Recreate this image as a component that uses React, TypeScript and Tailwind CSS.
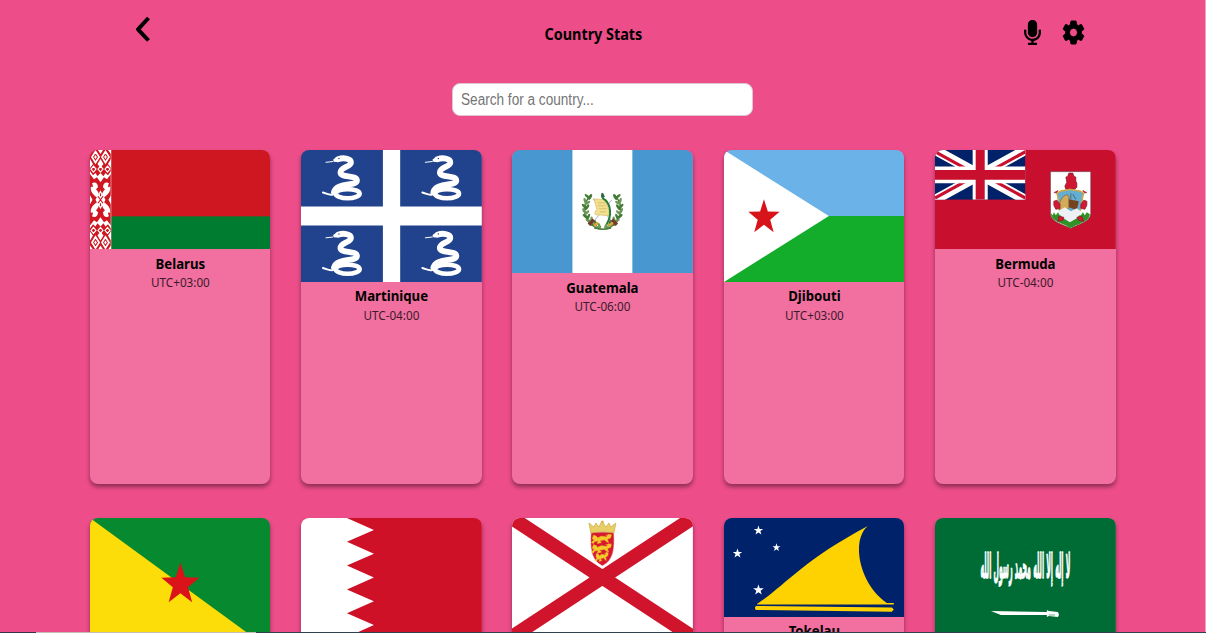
import type { ReactNode } from 'react';
import { FaMicrophone } from 'react-icons/fa';
import { MdSettings } from 'react-icons/md';

const STAR = '0,-10 2.35,-3.24 9.51,-3.09 3.8,1.24 5.88,8.09 0,4 -5.88,8.09 -3.8,1.24 -9.51,-3.09 -2.35,-3.24';

function Flag({ height, className, children }: { height: number; className: string; children: ReactNode }) {
  return (
    <svg viewBox={`0 0 181 ${height}`} preserveAspectRatio="none" className={`block w-full shrink-0 ${className}`} aria-hidden="true">
      {children}
    </svg>
  );
}

function OrnamentHalf() {
  return (
    <g>
      <path d="M0 0H3L0 4zM8 0h5l-2.500 4zM21 0h-3l3 4z" fill="#fff" />
      <path d="M5.500 1.500l3.600 5.500-3.600 5.500L2 7zM15.500 1.500L19 7l-3.500 5.500L12 7z" fill="none" stroke="#fff" strokeWidth="1.700" />
      <path d="M5.500 5l1.400 2-1.400 2-1.400-2zM15.500 5l1.400 2-1.400 2-1.400-2z" fill="#fff" />
      <path d="M0 9l3 5-3 4zM21 9l-3 5 3 4zM10.500 9l3 5-3 4-3-4z" fill="#fff" />
      <path d="M1 19l2.500-3L6 19l-2.500 3zM8 19l2.500-3 2.500 3-2.500 3zM15 19l2.500-3 2.500 3-2.500 3z" fill="none" stroke="#fff" strokeWidth="1.200" />
      <path d="M0 21l3 4 2.500-2 2 3 3-3 3 3 2-3L18 25l3-4v3l-4 5-3-2-3.500 5L7 27l-3 2-4-5z" fill="#fff" />
      <path d="M2 33c3-2 6 0 6 4l-2 2c2 2 3 4 3 6l-2 2C2 44 0 40 1 36c1 2 3 1 1-3zM19 33c-3-2-6 0-6 4l2 2c-2 2-3 4-3 6l2 2c5-3 7-7 6-11-1 2-3 1-1-3z" fill="#fff" />
    </g>
  );
}

function Belarus() {
  return (
    <Flag height={99} className="h-[99.500px]">
      <rect width="181" height="99" fill="#ce1720" />
      <rect y="66" width="181" height="33" fill="#007c30" />
      <rect width="21.200" height="99" fill="#ce1720" />
      <OrnamentHalf />
      <g transform="matrix(1 0 0 -1 0 99)"><OrnamentHalf /></g>
      <path d="M10.500 40l5 9.500-5 9.500-5-9.500z" fill="#fff" />
      <path d="M8 46l5 7M13 46l-5 7M10.500 43v3M10.500 53v3" stroke="#ce1720" strokeWidth="1.200" />
      <path d="M0 45l2.500 4.500L0 54zM21 45l-2.500 4.500L21 54z" fill="#fff" />
      <path d="M21 0v99" stroke="#fff" strokeWidth=".5" />
    </Flag>
  );
}

function Snake({ x, y }: { x: number; y: number }) {
  return (
    <g transform={`translate(${x} ${y})`} fill="none" stroke="#fff" strokeLinecap="round" strokeLinejoin="round">
      <path d="M37 9.200C42 7.500 50 8 50 12.500S39.500 17 39.500 22.500 56 24.500 56 30.500 36 32 33 42" strokeWidth="5.800" />
      <ellipse cx="46.700" cy="43.700" rx="12" ry="4.600" strokeWidth="4.600" />
      <path d="M34 10.200l5-1.200" strokeWidth="3.500" />
      <path d="M32 11.500l-7 .8" strokeWidth="1" />
      <path d="M32 44.500c-4 1-6-1-10-2" strokeWidth="2" />
      <circle cx="38" cy="8.500" r=".7" fill="#21428c" stroke="none" />
    </g>
  );
}

function Martinique() {
  return (
    <Flag height={132} className="h-[132px]">
      <rect width="181" height="132" fill="#21428c" />
      <path d="M82 0h17.300v132H82zM0 56.500h181v19H0z" fill="#fff" />
      <Snake x={0} y={0} />
      <Snake x={99.500} y={0} />
      <Snake x={0} y={75.500} />
      <Snake x={99.500} y={75.500} />
    </Flag>
  );
}

const LEAVES = [
  [76, 46, -10], [74, 51, 20], [73, 56, -5], [73, 61, 10], [74, 66, -15], [77, 70, -35], [81, 74, -50], [85, 77, -65],
];

function Laurel() {
  return (
    <g>
      <path d="M79 45c-9 9-9 26 5 33" fill="none" stroke="#477c3c" strokeWidth="1.500" />
      {LEAVES.map(([x, y, r], i) => (
        <g key={i} transform={`translate(${x} ${y}) rotate(${r})`} fill={i % 2 ? '#6c9857' : '#437b35'}>
          <ellipse cx="-.8" cy="0" rx="1.300" ry="3.300" transform="rotate(-38)" />
          <ellipse cx="2.600" cy="0" rx="1.300" ry="3.300" transform="rotate(38)" />
        </g>
      ))}
    </g>
  );
}

function Guatemala() {
  return (
    <Flag height={124} className="h-[123.500px]">
      <rect width="181" height="124" fill="#4997d0" />
      <rect x="60.500" width="60" height="124" fill="#fff" />
      <Laurel />
      <g transform="matrix(-1 0 0 1 181.500 0)"><Laurel /></g>
      <path d="M79 75l21-25M103 75L81 49" stroke="#aaa9b2" strokeWidth=".9" />
      <path d="M77 75l5-5M105 75l-5-5" stroke="#743b2c" strokeWidth="3.500" />
      <path d="M82 49l13 1c1 3-1 5 2 9v7l-13-1c-2-1-1-4 1-5z" fill="#f2df90" stroke="#d4b961" strokeWidth=".6" />
      <path d="M86 53h8M86 56h8M87 59h8M88 62h6" stroke="#c9ad62" strokeWidth=".6" />
      <path d="M91 45c-2 1 0 4 2 5 6 5 7 16 2 24" fill="none" stroke="#247b39" strokeWidth="2" />
      <path d="M89 44l2-1 2 4-2 1z" fill="#26643b" />
      <path d="M82 76l4-3M97 76l4-3" stroke="#dda72d" strokeWidth="2.500" />
      <path d="M83 78q8 3 16 0" stroke="#477c3c" strokeWidth="1.500" fill="none" />
    </Flag>
  );
}

function Djibouti() {
  return (
    <Flag height={132} className="h-[132px]">
      <rect width="181" height="66" fill="#6ab2e7" />
      <rect y="66" width="181" height="66" fill="#14ad2b" />
      <path d="M0 0l105 66L0 132z" fill="#fff" />
      <polygon points={STAR} transform="translate(40 67.500) scale(1.650 1.830)" fill="#d7141a" />
    </Flag>
  );
}

function Bermuda() {
  return (
    <Flag height={99} className="h-[99.500px]">
      <rect width="181" height="99" fill="#c8102e" />
      <svg width="90.500" height="49.500" viewBox="0 0 60 30" preserveAspectRatio="none">
        <rect width="60" height="30" fill="#012169" />
        <path d="M0 0l60 30M60 0L0 30" stroke="#fff" strokeWidth="6" />
        <path d="M0 1l28 14M60 29L32 15M60 1L32 15M0 29l28-14" stroke="#c8102e" strokeWidth="2" />
        <path d="M30 0v30M0 15h60" stroke="#fff" strokeWidth="10" />
        <path d="M30 0v30M0 15h60" stroke="#c8102e" strokeWidth="6" />
      </svg>
      <path d="M115.500 21.500H156V63c0 9-15 12-20 15-6-3-20.500-6-20.500-15z" fill="#fff" stroke="#74313d" strokeWidth=".7" />
      <path d="M116 63l2 2 1-3 2 3 2-3 2 3h21l2-3 2 3 2-3 3 2c0 8-14 10-19.500 14C130 73 116 72 116 63z" fill="#329126" />
      <path d="M131 27l2-1 1-3h4l1 3 2 1v4l1 2v4l-2 2h-9l-1-3 2-4z" fill="#cf1731" stroke="#7a172a" strokeWidth=".7" />
      <path d="M122 43c5-4 8-2 13-4 5 2 9 0 14 4-3 6-1 12-3 16-3 5-7 7-11 10-5-3-8-5-11-10-2-5 1-10-2-16z" fill="#64afd1" stroke="#cfa743" strokeWidth="1.500" />
      <path d="M125 52c3-7 7-9 9-6v11l-3 4-6-1z" fill="#d2aa59" stroke="#86602b" strokeWidth=".7" />
      <path d="M134 49l10 2-2 9-8-3z" fill="#75431f" />
      <path d="M123 61l7-4 6 4 6-3 5 4-5 6-7 4-8-5z" fill="#edf0f4" />
      <path d="M136 43v6M138 44l3 5" stroke="#526c82" strokeWidth="1" />
      <path d="M123 40c-1 3-2 3-4 2M148 40c1 3 3 3 4 2M119 51l3-1 3 4v4l-4 1-2-4zM152 51l-3-1-3 4v4l4 1 2-4zM124 66l5 1-1 3-5 1zM147 66l-5 1 2 3 5 1z" fill="#d31934" stroke="#8e1c30" strokeWidth=".8" />
    </Flag>
  );
}

function FrenchGuiana() {
  return (
    <Flag height={132} className="h-[132px]">
      <rect width="181" height="132" fill="#078930" />
      <path d="M0 0l181 132H0z" fill="#fcdd09" />
      <polygon points={STAR} transform="translate(90.500 66.500) scale(2 2.200)" fill="#da121a" />
    </Flag>
  );
}

function Bahrain() {
  return (
    <Flag height={119} className="h-[119px]">
      <rect width="181" height="119" fill="#ce1126" />
      <path d="M0 0h46l27 11.900-27 11.900 27 11.900-27 11.900 27 11.900-27 11.900 27 11.900-27 11.900 27 11.900L46 119H0z" fill="#fff" />
    </Flag>
  );
}

function Jersey() {
  return (
    <Flag height={119} className="h-[119px]">
      <rect width="181" height="119" fill="#fff" />
      <path d="M0 0l181 119M181 0L0 119" stroke="#cf142b" strokeWidth="14" />
      <path d="M79 14h23c1 17 0 28-11.500 34C79 42 78 31 79 14z" fill="#d71930" stroke="#fff" strokeWidth=".6" />
      <path d="M79 15l-2-10 5 4 2-4 3 4 3-6 4 6 3-4 2 4 5-4-2 10q-11-3-23 0z" fill="#e8cf65" stroke="#c9a940" strokeWidth=".7" />
      <circle cx="90.500" cy="4" r="1.500" fill="#deb944" />
      {[20, 29.500, 38].map((y, i) => (
        <path key={y} transform={`translate(90.500 ${y}) scale(${i === 2 ? 0.65 : 1} .9)`} d="M-9-3l3 1 1 2 4-2 5 1 2-3 3 1-1 3-3 1 1 4-2-1-2-2-5 1 2 2-4 1 1-3-4 1-1 2-2-1 3-3-2-1zM3-3l6-1" fill="#f2cb29" stroke="#f2cb29" strokeWidth=".6" />
      ))}
    </Flag>
  );
}

function Tokelau() {
  return (
    <Flag height={99} className="h-[99px]">
      <rect width="181" height="99" fill="#00226b" />
      <path d="M33 86C63 66 78 43 144 8c-17 14-9 58 19 77h7v1.600H33zM32 88l136 1.500 2 2-2 2.200L32 92q-2-2 0-4z" fill="#fed100" />
      {[[34.500, 12.500, 0.5], [13.500, 35.500, 0.5], [52.500, 29.500, 0.42], [34.500, 72, 0.56]].map(([x, y, s]) => (
        <polygon key={y} points={STAR} transform={`translate(${x} ${y}) scale(${s})`} fill="#fff" />
      ))}
    </Flag>
  );
}

function SaudiArabia() {
  return (
    <Flag height={121} className="h-[121px]">
      <rect width="181" height="121" fill="#006c35" />
      <text transform="translate(90.500 59.500) scale(.545 2)" fontSize="17" fontWeight="700" fontFamily="'DejaVu Sans', sans-serif" textAnchor="middle" textLength="165" lengthAdjust="spacingAndGlyphs" fill="#fff" stroke="#fff" strokeWidth=".7">لا إله إلا الله محمد رسول الله</text>
      <path d="M56 93l56 1v-2l2 1 9 1q2 3 0 5l-9-1-2 1v-2h-46z" fill="#fff" />
      <path d="M114 97h6" stroke="#006c35" strokeWidth=".6" />
    </Flag>
  );
}

const countries = [
  { name: 'Belarus', zone: 'UTC+03:00', flag: <Belarus /> },
  { name: 'Martinique', zone: 'UTC-04:00', flag: <Martinique /> },
  { name: 'Guatemala', zone: 'UTC-06:00', flag: <Guatemala /> },
  { name: 'Djibouti', zone: 'UTC+03:00', flag: <Djibouti /> },
  { name: 'Bermuda', zone: 'UTC-04:00', flag: <Bermuda /> },
  { name: '', zone: '', flag: <FrenchGuiana /> },
  { name: '', zone: '', flag: <Bahrain /> },
  { name: '', zone: '', flag: <Jersey /> },
  { name: 'Tokelau', zone: '', flag: <Tokelau /> },
  { name: '', zone: '', flag: <SaudiArabia /> },
];

export default function App() {
  return (
    <div className="flex h-[633px] w-[1206px] flex-col overflow-hidden bg-[#ed4d89] font-['Noto_Sans',sans-serif] text-black">
      <div className="min-h-0 flex-1 overflow-hidden border-r border-[#f3a3c1]">
        <header className="flex h-[83px] items-start justify-between pl-[135px] pr-[120px]">
          <button aria-label="Back" className="mt-4">
            <svg width="16" height="27" viewBox="0 0 16 27" fill="none" stroke="currentColor" strokeWidth="4" strokeLinejoin="round" className="block">
              <path d="M13.500 2L3 13.300 13.500 24.500" />
            </svg>
          </button>
          <h1 className="ml-[12px] mt-[22px] origin-center scale-x-[.9] whitespace-nowrap text-base font-bold leading-6">Country Stats</h1>
          <div className="mt-5 flex gap-[21px]">
            <button aria-label="Voice search"><FaMicrophone preserveAspectRatio="none" className="h-[25px] w-[17px]" /></button>
            <button aria-label="Settings"><MdSettings viewBox="1.600 1.600 20.800 20.800" stroke="currentColor" strokeWidth=".8" preserveAspectRatio="none" className="h-[25px] w-[23px]" /></button>
          </div>
        </header>
        <label className="mx-auto ml-[452px] flex h-[33px] w-[301px] items-center overflow-hidden rounded-lg border border-[#dfc5d0] bg-white pl-2">
          <input aria-label="Search for a country" placeholder="Search for a country..." className="w-[330px] origin-left scale-x-[.85] font-['Liberation_Sans',sans-serif] text-base outline-none placeholder:text-[#757575]" />
        </label>
        <main className="mt-[33.500px] grid grid-cols-[repeat(5,180.800px)] gap-x-[30.500px] gap-y-[33.500px] pl-[89.700px]">
          {countries.map(({ name, zone, flag }, i) => (
            <article key={i} className="flex h-[334.500px] flex-col overflow-hidden rounded-lg bg-[#f1709f] text-center shadow-[0_3px_4px_rgba(0,0,0,0.400)]">
              {flag}
              <h2 className="mt-[3.500px] scale-x-[.88] whitespace-nowrap text-[15px] font-bold leading-[21px]">{name}</h2>
              <p className="mt-[.5px] scale-x-[.88] text-[13.300px] leading-[17px] text-[#3b1a2b]">{zone}</p>
            </article>
          ))}
        </main>
      </div>
      <div className="flex h-px shrink-0">
        <div className="w-9 bg-[#39314a]" />
        <div className="w-[220px] bg-[#c8bcb9]" />
        <div className="flex-1 bg-[#30404d]" />
      </div>
    </div>
  );
}
